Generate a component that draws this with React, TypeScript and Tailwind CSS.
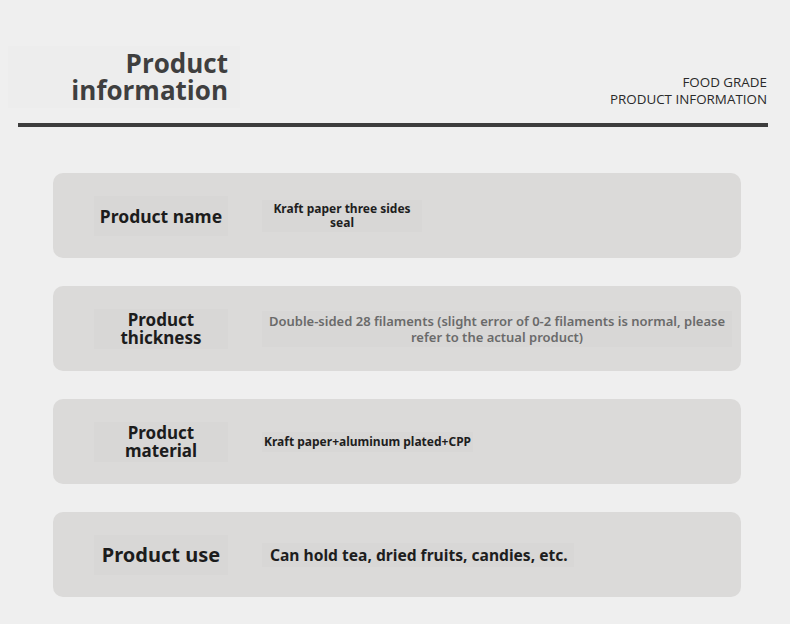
const rows = [
  {
    label: ["Product name"],
    labelClass: "text-[17.5px] leading-[18px]",
    value: "Kraft paper three sides seal",
    valueClass: "w-[156px] text-[12px] leading-[14px] font-bold text-[#1e1e1e] text-center",
  },
  {
    label: ["Product", "thickness"],
    labelClass: "text-[17px] leading-[18px]",
    value:
      "Double-sided 28 filaments (slight error of 0-2 filaments is normal, please refer to the actual product)",
    valueClass: "w-[466px] text-[13px] leading-[16px] font-semibold text-[#6a6a6a] text-center",
  },
  {
    label: ["Product", "material"],
    labelClass: "text-[17px] leading-[18px]",
    value: "Kraft paper+aluminum plated+CPP",
    valueClass: "text-[12px] leading-[16px] font-bold text-[#1e1e1e]",
  },
  {
    label: ["Product use"],
    labelClass: "text-[20px] leading-[22px]",
    value: "Can hold tea, dried fruits, candies, etc.",
    valueClass: "pl-[6px] pr-[4px] text-[15.6px] leading-[20px] font-bold text-[#1e1e1e]",
  },
];

export default function App() {
  return (
    <div className="w-[790px] h-[624px] bg-[#efefef] font-['Noto_Sans',sans-serif] overflow-hidden">
      <div className="flex items-end justify-between pt-[46px] pl-[8px] pr-[23px]">
        <div className="w-[232px] h-[62px] bg-[#ededed] flex flex-col items-end justify-center pr-[12px]">
          <div className="font-['Open_Sans',sans-serif] font-bold text-[26px] leading-[27px] text-[#3f3f3f] text-right">
            Product
            <br />
            information
          </div>
        </div>
        <div className="font-['Open_Sans',sans-serif] text-[13.4px] leading-[17px] text-[#2a2a2a] text-right">
          FOOD GRADE
          <br />
          PRODUCT INFORMATION
        </div>
      </div>
      <div className="mt-[15px] ml-[18px] w-[750px] h-[4px] bg-[#3d3d3d]" />

      <div className="mt-[46px] ml-[53px] w-[688px] flex flex-col gap-[28px]">
        {rows.map((r) => (
          <div key={r.label[0] + r.label.length} className="h-[85px] rounded-[10px] bg-[#dbdad9] flex items-center">
            <div className="ml-[41px] w-[134px] h-[40px] bg-[#d8d7d6] flex items-center justify-center">
              <div className={"font-bold text-[#1c1c1c] text-center " + r.labelClass}>
                {r.label.map((l, i) => (
                  <div key={i}>{l}</div>
                ))}
              </div>
            </div>
            <div className="ml-[34px] bg-[#d8d7d6] px-[2px] py-[2px]">
              <div className={r.valueClass}>{r.value}</div>
            </div>
          </div>
        ))}
      </div>
    </div>
  );
}
